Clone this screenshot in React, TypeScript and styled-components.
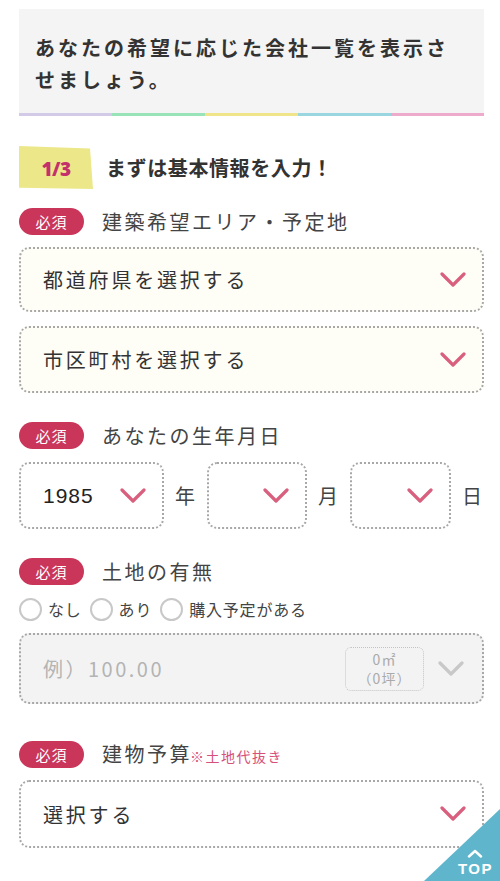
import React from "react";
import styled, { createGlobalStyle } from "styled-components";

const Global = createGlobalStyle`
  html, body { margin: 0; padding: 0; background: #fff; }
  body { font-family: "Noto Sans CJK JP", "Noto Sans", sans-serif; color: #333; }
  * { box-sizing: border-box; }
`;

const Page = styled.div`
  width: 465px;
  margin-left: 19px;
  padding-top: 9px;
  padding-bottom: 40px;
`;

const Header = styled.div`
  background: #f4f4f4;
  padding: 23px 16px 17px;
  font-size: 20px;
  font-weight: 700;
  line-height: 32px;
  letter-spacing: 3px;
  color: #333;
`;

const Rainbow = styled.div`
  display: flex;
  height: 3px;
`;

const Stripe = styled.div<{ $c: string }>`
  flex: 1;
  background: ${(p) => p.$c};
`;

const StepRow = styled.div`
  display: flex;
  align-items: center;
  gap: 13px;
  margin-top: 30px;
  height: 43px;
`;

const StepBadge = styled.div`
  width: 74px;
  height: 43px;
  background: #ece88a;
  clip-path: polygon(0 0, 96% 6%, 100% 100%, 0 97%);
  display: flex;
  align-items: center;
  justify-content: center;
  color: #c4306c;
  font-family: "Open Sans", "Noto Sans", sans-serif;
  font-weight: 800;
  font-size: 19px;
  letter-spacing: -0.5px;
  padding-top: 2px;
`;

const StepTitle = styled.div`
  font-size: 20px;
  font-weight: 700;
  letter-spacing: 0.6px;
  line-height: 30px;
  color: #333;
`;

const LabelRow = styled.div<{ $mt: number }>`
  display: flex;
  align-items: center;
  gap: 18px;
  margin-top: ${(p) => p.$mt}px;
  height: 27px;
`;

const Required = styled.span`
  width: 65px;
  height: 27px;
  border-radius: 14px;
  background: #c9365a;
  color: #fff;
  font-size: 15px;
  letter-spacing: 1px;
  display: flex;
  align-items: center;
  justify-content: center;
`;

const LabelText = styled.span`
  font-size: 20px;
  line-height: 27px;
  letter-spacing: 2.5px;
  color: #444;
  display: flex;
  align-items: baseline;
`;

const Note = styled.span`
  font-size: 14px;
  letter-spacing: 1.5px;
  color: #d6507a;
  margin-left: -2px;
`;

const Stack = styled.div`
  display: flex;
  flex-direction: column;
  gap: 14px;
  margin-top: 12px;
`;

const SelectBox = styled.div<{ $bg?: string; $h?: number; $w?: number }>`
  display: flex;
  align-items: center;
  justify-content: space-between;
  width: ${(p) => (p.$w ? `${p.$w}px` : "100%")};
  height: ${(p) => p.$h ?? 66}px;
  background: ${(p) => p.$bg ?? "#fff"};
  border: 2px dotted #a8a8a8;
  border-radius: 10px;
  padding: 0 16px 0 22px;
  flex-shrink: 0;
`;

const SelectText = styled.span<{ $c?: string }>`
  font-size: 20px;
  letter-spacing: 2.8px;
  color: ${(p) => p.$c ?? "#333"};
`;

const NumText = styled.span`
  font-family: "Liberation Sans", Arial, sans-serif;
  font-size: 21px;
  letter-spacing: 1px;
  color: #222;
`;

const Chevron = ({ color = "#d8607e" }: { color?: string }) => (
  <svg width="26" height="16" viewBox="0 0 26 16" style={{ flexShrink: 0 }}>
    <path d="M2 2 L13 13 L24 2" fill="none" stroke={color} strokeWidth="3.2" strokeLinecap="round" strokeLinejoin="round" />
  </svg>
);

const DateRow = styled.div`
  display: flex;
  align-items: center;
  margin-top: 13px;
`;

const Unit = styled.span`
  font-size: 20px;
  color: #444;
  margin: 0 12px 0 11px;
`;

const RadioRow = styled.div`
  display: flex;
  align-items: center;
  gap: 8px;
  margin-top: 12px;
  height: 24px;
`;

const RadioItem = styled.label`
  display: flex;
  align-items: center;
  gap: 6px;
  font-size: 16px;
  letter-spacing: 0.8px;
  color: #444;
`;

const Circle = styled.span`
  width: 23px;
  height: 23px;
  border-radius: 50%;
  border: 2.5px solid #c8c8c8;
  background: #fff;
`;

const InputBox = styled.div`
  display: flex;
  align-items: center;
  height: 71px;
  margin-top: 12px;
  background: #f3f3f3;
  border: 2px dotted #a8a8a8;
  border-radius: 10px;
  padding: 0 18px 0 22px;
`;

const Placeholder = styled.span`
  flex: 1;
  font-size: 20px;
  letter-spacing: 2.5px;
  color: #b4b4b4;
`;

const AreaBox = styled.div`
  width: 79px;
  height: 44px;
  border: 1px dotted #c4c4c4;
  border-radius: 6px;
  display: flex;
  flex-direction: column;
  align-items: center;
  justify-content: center;
  font-size: 14px;
  line-height: 19px;
  letter-spacing: 1px;
  color: #aaa;
  margin-right: 14px;
`;

const AreaLine = styled.span`
  display: block;
  height: 19px;
`;

const TopButton = styled.a`
  position: fixed;
  right: 0;
  bottom: 0;
  width: 76px;
  height: 72px;
  background: #5fb6cc;
  clip-path: polygon(100% 0, 100% 100%, 0 100%);
  display: flex;
  flex-direction: column;
  align-items: flex-end;
  justify-content: flex-end;
  padding: 0 7px 4px 0;
  color: #fff;
  text-decoration: none;
`;

const TopInner = styled.span`
  display: flex;
  flex-direction: column;
  align-items: center;
  gap: 3px;
`;

const TopText = styled.span`
  font-family: "Liberation Sans", Arial, sans-serif;
  font-weight: 700;
  font-size: 15px;
  letter-spacing: 1.5px;
  line-height: 16px;
`;

export default function App() {
  const stripes = ["#d2cae6", "#98e4b8", "#efe48a", "#9ad6e0", "#eeaaca"];
  return (
    <>
      <Global />
      <Page>
        <Header>あなたの希望に応じた会社一覧を表示させましょう。</Header>
        <Rainbow>
          {stripes.map((c) => (
            <Stripe key={c} $c={c} />
          ))}
        </Rainbow>

        <StepRow>
          <StepBadge>1/3</StepBadge>
          <StepTitle>まずは基本情報を入力！</StepTitle>
        </StepRow>

        <LabelRow $mt={19}>
          <Required>必須</Required>
          <LabelText>建築希望エリア・予定地</LabelText>
        </LabelRow>
        <Stack>
          <SelectBox $bg="#fffef6" $h={65}>
            <SelectText>都道府県を選択する</SelectText>
            <Chevron />
          </SelectBox>
          <SelectBox $bg="#fffef6" $h={67}>
            <SelectText>市区町村を選択する</SelectText>
            <Chevron />
          </SelectBox>
        </Stack>

        <LabelRow $mt={29}>
          <Required>必須</Required>
          <LabelText>あなたの生年月日</LabelText>
        </LabelRow>
        <DateRow>
          <SelectBox $w={145} $h={67}>
            <NumText>1985</NumText>
            <Chevron />
          </SelectBox>
          <Unit>年</Unit>
          <SelectBox $w={100} $h={67}>
            <span />
            <Chevron />
          </SelectBox>
          <Unit>月</Unit>
          <SelectBox $w={101} $h={67}>
            <span />
            <Chevron />
          </SelectBox>
          <Unit>日</Unit>
        </DateRow>

        <LabelRow $mt={29}>
          <Required>必須</Required>
          <LabelText>土地の有無</LabelText>
        </LabelRow>
        <RadioRow>
          <RadioItem>
            <Circle />
            なし
          </RadioItem>
          <RadioItem>
            <Circle />
            あり
          </RadioItem>
          <RadioItem>
            <Circle />
            購入予定がある
          </RadioItem>
        </RadioRow>
        <InputBox>
          <Placeholder>例）100.00</Placeholder>
          <AreaBox>
            <AreaLine>0㎡</AreaLine>
            <AreaLine>（0坪）</AreaLine>
          </AreaBox>
          <Chevron color="#c8c8c8" />
        </InputBox>

        <LabelRow $mt={37}>
          <Required>必須</Required>
          <LabelText>
            建物予算<Note>※土地代抜き</Note>
          </LabelText>
        </LabelRow>
        <Stack>
          <SelectBox $h={68}>
            <SelectText>選択する</SelectText>
            <Chevron />
          </SelectBox>
        </Stack>
      </Page>
      <TopButton href="#">
        <TopInner>
          <svg width="16" height="9" viewBox="0 0 16 9">
            <path d="M2 7.5 L8 2 L14 7.5" fill="none" stroke="#fff" strokeWidth="2.4" strokeLinecap="round" strokeLinejoin="round" />
          </svg>
          <TopText>TOP</TopText>
        </TopInner>
      </TopButton>
    </>
  );
}
